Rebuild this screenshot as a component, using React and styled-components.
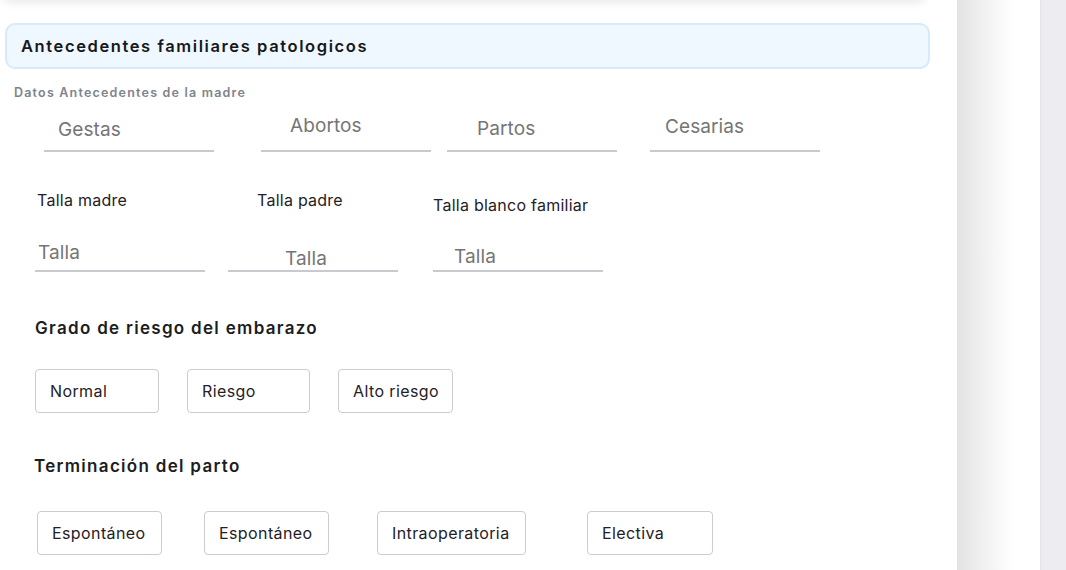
import React from 'react';
import styled, { createGlobalStyle } from 'styled-components';

const Global = createGlobalStyle`
  html, body {
    margin: 0;
    padding: 0;
    background: #fff;
  }
  body {
    font-family: Inter, "Noto Sans", sans-serif;
    color: #1d1f24;
  }
`;

const Page = {
  Wrapper: styled.div`
    display: flex;
    height: 100vh;
    overflow: hidden;
  `,
  Main: styled.main`
    width: 957px;
    flex-shrink: 0;
    overflow: hidden;
  `,
  Gutter: styled.div`
    width: 83px;
    flex-shrink: 0;
    background: linear-gradient(to right, #e3e3e3, #f4f4f4 40%, #ffffff 68%);
  `,
  Edge: styled.div`
    flex: 1;
    background: #ececf1;
    border-left: 1px solid #e3e3e9;
  `,
  TopCard: styled.div`
    width: 928px;
    height: 20px;
    margin-top: -20px;
    border-radius: 0 0 14px 14px;
    background: #fff;
    box-shadow: 0 3px 10px rgba(0, 0, 0, 0.09);
  `,
};

const Section = {
  Banner: styled.div`
    margin: 23px 0 0 5px;
    width: 925px;
    height: 46px;
    box-sizing: border-box;
    display: flex;
    align-items: center;
    padding-left: 14px;
    background: #eff7ff;
    border: 2px solid #d5ebfd;
    border-radius: 10px;
  `,
  BannerTitle: styled.h2`
    margin: 0;
    font-size: 16.5px;
    font-weight: 600;
    letter-spacing: 1.6px;
    color: #16181c;
  `,
  Caption: styled.div`
    margin: 16px 0 0 14px;
    font-size: 12.5px;
    line-height: 16px;
    font-weight: 600;
    letter-spacing: 1.2px;
    color: #80838c;
  `,
  Heading: styled.h3`
    margin: ${p => p.$top}px 0 0 ${p => p.$left}px;
    font-size: 17px;
    line-height: 22px;
    font-weight: 600;
    letter-spacing: 1.3px;
    color: #1b1d22;
  `,
};

const Fields = {
  Row: styled.div`
    display: flex;
    align-items: ${p => p.$align || 'flex-end'};
    margin-left: ${p => p.$left}px;
    margin-top: ${p => p.$top}px;
  `,
  Column: styled.div`
    display: flex;
    flex-direction: column;
    margin-left: ${p => p.$gap || 0}px;
  `,
  Label: styled.label`
    font-size: 16px;
    line-height: 20px;
    letter-spacing: 0.25px;
    color: #1f2126;
    padding-left: ${p => p.$indent}px;
    margin-top: ${p => p.$top || 0}px;
    white-space: nowrap;
  `,
  Input: styled.input`
    width: 170px;
    height: ${p => 26 + p.$pb}px;
    box-sizing: border-box;
    margin: ${p => p.$top || 0}px 0 0 ${p => p.$gap || 0}px;
    padding: 0 0 ${p => p.$pb}px ${p => p.$indent}px;
    border: none;
    border-bottom: 2px solid #c8cad0;
    background: transparent;
    font-family: Inter, "Noto Sans", sans-serif;
    font-size: 19px;
    letter-spacing: 0.1px;
    color: #333;
    outline: none;

    ::placeholder {
      color: #9da0a9;
    }
  `,
};

const Options = {
  Row: styled.div`
    display: flex;
    margin: ${p => p.$top}px 0 0 ${p => p.$left}px;
  `,
  Button: styled.button`
    width: ${p => p.$w}px;
    height: 44px;
    margin-left: ${p => p.$gap || 0}px;
    padding: 0 0 0 14px;
    text-align: left;
    box-sizing: border-box;
    background: #fff;
    border: 1px solid #c9ccd2;
    border-radius: 4px;
    font-family: Inter, "Noto Sans", sans-serif;
    font-size: 16px;
    letter-spacing: 0.4px;
    color: #1f2126;
    cursor: pointer;
  `,
};

const madre = [
  { ph: 'Gestas', gap: 0, indent: 14, pb: 9 },
  { ph: 'Abortos', gap: 47, indent: 29, pb: 13 },
  { ph: 'Partos', gap: 16, indent: 30, pb: 10 },
  { ph: 'Cesarias', gap: 33, indent: 15, pb: 12 },
];

const tallas = [
  { label: 'Talla madre', gap: 0, lIndent: 2, lTop: 0, indent: 3, pb: 6, top: 30 },
  { label: 'Talla padre', gap: 23, lIndent: 29, lTop: 0, indent: 57, pb: 0, top: 36 },
  { label: 'Talla blanco familiar', gap: 35, lIndent: -3, lTop: 5, indent: 21, pb: 2, top: 29 },
];

const riesgo = [
  { text: 'Normal', w: 124, gap: 0 },
  { text: 'Riesgo', w: 123, gap: 28 },
  { text: 'Alto riesgo', w: 115, gap: 28 },
];

const parto = [
  { text: 'Espontáneo', w: 125, gap: 0 },
  { text: 'Espontáneo', w: 125, gap: 42 },
  { text: 'Intraoperatoria', w: 149, gap: 48 },
  { text: 'Electiva', w: 126, gap: 61 },
];

const App = () => {
  return (
    <Page.Wrapper>
      <Global />
      <Page.Main>
        <Page.TopCard />
        <Section.Banner>
          <Section.BannerTitle>Antecedentes familiares patologicos</Section.BannerTitle>
        </Section.Banner>
        <Section.Caption>Datos Antecedentes de la madre</Section.Caption>

        <Fields.Row $left={44} $top={12}>
          {madre.map(f => (
            <Fields.Input
              key={f.ph}
              placeholder={f.ph}
              $gap={f.gap}
              $indent={f.indent}
              $pb={f.pb}
            />
          ))}
        </Fields.Row>

        <Fields.Row $left={35} $top={38} $align="flex-start">
          {tallas.map(t => (
            <Fields.Column key={t.label} $gap={t.gap}>
              <Fields.Label $indent={t.lIndent} $top={t.lTop}>
                {t.label}
              </Fields.Label>
              <Fields.Input placeholder="Talla" $indent={t.indent} $pb={t.pb} $top={t.top} />
            </Fields.Column>
          ))}
        </Fields.Row>

        <Section.Heading $top={45} $left={35}>
          Grado de riesgo del embarazo
        </Section.Heading>
        <Options.Row $top={30} $left={35}>
          {riesgo.map(b => (
            <Options.Button key={b.text} $w={b.w} $gap={b.gap}>
              {b.text}
            </Options.Button>
          ))}
        </Options.Row>

        <Section.Heading $top={42} $left={34}>
          Terminación del parto
        </Section.Heading>
        <Options.Row $top={34} $left={37}>
          {parto.map((b, i) => (
            <Options.Button key={i} $w={b.w} $gap={b.gap}>
              {b.text}
            </Options.Button>
          ))}
        </Options.Row>
      </Page.Main>
      <Page.Gutter />
      <Page.Edge />
    </Page.Wrapper>
  );
};

export default App;
